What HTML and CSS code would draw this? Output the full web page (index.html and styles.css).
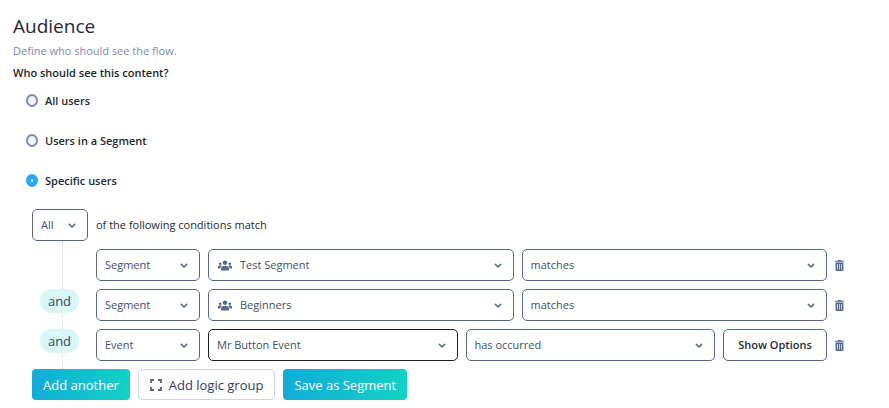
FILE: index.html
```html
<!DOCTYPE html>
<html lang="en">

<head>
    <meta charset="UTF-8">
    <meta name="viewport" content="width=device-width, initial-scale=1.0">
    <title>Audience</title>
    <link rel="stylesheet" href="styles.css">
</head>

<body>
    <svg class="sprite" aria-hidden="true">
        <symbol id="chevron" viewBox="0 0 8 6">
            <path d="M1.4 1.4 L4 4 L6.6 1.4" fill="none" stroke="currentColor" stroke-width="1.5" stroke-linecap="round" stroke-linejoin="round" />
        </symbol>
        <symbol id="people" viewBox="0 0 14 12">
            <circle cx="7" cy="2.8" r="2.2" />
            <circle cx="2.2" cy="3.7" r="1.3" />
            <circle cx="11.8" cy="3.7" r="1.3" />
            <path d="M3 10.6 V9 C3 7 4.3 5.9 5.6 5.9 H8.4 C9.7 5.9 11 7 11 9 V10.6 Z" />
            <path d="M0 8.4 V7 C0 6.1 .7 5.5 1.5 5.5 H3 C3.4 5.5 3.8 5.6 4 5.8 C3.1 6.4 2.5 7.2 2.4 8.4 Z" />
            <path d="M14 8.4 V7 C14 6.1 13.3 5.5 12.5 5.5 H11 C10.6 5.5 10.2 5.6 10 5.8 C10.9 6.4 11.5 7.2 11.6 8.4 Z" />
        </symbol>
        <symbol id="trash" viewBox="0 0 9 11">
            <path d="M0 .8 H2.6 L3 0 H6 L6.4 .8 H9 V1.8 H0 Z" />
            <path fill-rule="evenodd" d="M.6 2.4 H8.4 V10 Q8.4 11 7.4 11 H1.6 Q.6 11 .6 10 Z M2.2 4 V9.4 H2.9 V4 Z M4.15 4 V9.4 H4.85 V4 Z M6.1 4 V9.4 H6.8 V4 Z" />
        </symbol>
        <symbol id="expand" viewBox="0 0 12 12">
            <path d="M1 4 V1 H4 M8 1 H11 V4 M11 8 V11 H8 M4 11 H1 V8" fill="none" stroke="currentColor" stroke-width="1.8" />
        </symbol>
    </svg>

    <main class="audience">
        <h1>Audience</h1>
        <p class="hint">Define who should see the flow.</p>

        <fieldset class="who">
            <legend>Who should see this content?</legend>
            <label class="option"><input type="radio" name="who" value="all">All users</label>
            <label class="option"><input type="radio" name="who" value="segment">Users in a Segment</label>
            <label class="option"><input type="radio" name="who" value="specific" checked>Specific users</label>
        </fieldset>

        <section class="builder">
            <div class="match">
                <span class="select select-short">
                    <select id="match"><option>All</option><option>Any</option></select>
                    <svg class="chevron"><use href="#chevron" /></svg>
                </span>
                <label for="match">of the following conditions match</label>
            </div>

            <div class="conditions">
                <div class="condition">
                    <div class="joiner"></div>
                    <span class="select select-type">
                        <select aria-label="Condition type"><option>Segment</option><option>Event</option></select>
                        <svg class="chevron"><use href="#chevron" /></svg>
                    </span>
                    <span class="select with-icon">
                        <svg class="people"><use href="#people" /></svg>
                        <select aria-label="Segment"><option>Test Segment</option><option>Beginners</option></select>
                        <svg class="chevron"><use href="#chevron" /></svg>
                    </span>
                    <span class="select">
                        <select aria-label="Operator"><option>matches</option></select>
                        <svg class="chevron"><use href="#chevron" /></svg>
                    </span>
                    <button type="button" class="delete" aria-label="Delete condition"><svg><use href="#trash" /></svg></button>
                </div>

                <div class="condition">
                    <div class="joiner"><span class="and">and</span></div>
                    <span class="select select-type">
                        <select aria-label="Condition type"><option>Segment</option><option>Event</option></select>
                        <svg class="chevron"><use href="#chevron" /></svg>
                    </span>
                    <span class="select with-icon">
                        <svg class="people"><use href="#people" /></svg>
                        <select aria-label="Segment"><option>Beginners</option><option>Test Segment</option></select>
                        <svg class="chevron"><use href="#chevron" /></svg>
                    </span>
                    <span class="select">
                        <select aria-label="Operator"><option>matches</option></select>
                        <svg class="chevron"><use href="#chevron" /></svg>
                    </span>
                    <button type="button" class="delete" aria-label="Delete condition"><svg><use href="#trash" /></svg></button>
                </div>

                <div class="condition">
                    <div class="joiner"><span class="and">and</span></div>
                    <span class="select select-type">
                        <select aria-label="Condition type"><option>Event</option><option>Segment</option></select>
                        <svg class="chevron"><use href="#chevron" /></svg>
                    </span>
                    <span class="select active">
                        <select aria-label="Event"><option>Mr Button Event</option></select>
                        <svg class="chevron"><use href="#chevron" /></svg>
                    </span>
                    <span class="select">
                        <select aria-label="Operator"><option>has occurred</option></select>
                        <svg class="chevron"><use href="#chevron" /></svg>
                    </span>
                    <button type="button" class="show-options">Show Options</button>
                    <button type="button" class="delete" aria-label="Delete condition"><svg><use href="#trash" /></svg></button>
                </div>
            </div>

            <div class="actions">
                <button type="button" class="btn btn-primary">Add another</button>
                <button type="button" class="btn btn-outline"><svg><use href="#expand" /></svg>Add logic group</button>
                <button type="button" class="btn btn-primary">Save as Segment</button>
            </div>
        </section>
    </main>
</body>

</html>
```

FILE: styles.css
```css
* {
    box-sizing: border-box;
}

body {
    margin: 0;
    background-color: #fff;
    color: #242a35;
    font-family: "Open Sans", "Noto Sans", sans-serif;
    font-size: 11px;
}

button,
select {
    font: inherit;
    cursor: pointer;
}

svg {
    fill: currentColor;
}

.sprite {
    display: none;
}

.audience {
    padding: 12px 45px 8px 13px;
}

h1 {
    margin: 0;
    font-size: 19px;
    font-weight: 400;
    line-height: 28px;
}

.hint {
    margin: 0;
    color: #7d89b0;
    line-height: 21px;
}

/* Radio options */
.who {
    display: flex;
    flex-direction: column;
    gap: 8px;
    margin: 0 0 12px;
    padding: 0;
    border: 0;
}

.who legend {
    padding: 0;
    color: #1c1f2b;
    font-weight: 600;
    line-height: 24px;
}

.option {
    display: flex;
    align-items: center;
    gap: 7px;
    height: 32px;
    padding: 0 0 1px 13px;
    font-weight: 600;
}

.option input {
    appearance: none;
    width: 12px;
    height: 13px;
    margin: 0;
    border: 2px solid #7d89b0;
    border-radius: 50%;
    background-color: #f0f3fb;
}

.option input:checked {
    border: 5px solid #2aa7ff;
    background-color: #fff;
}

/* Condition builder */
.builder {
    padding-left: 19px;
}

.match {
    display: flex;
    align-items: center;
    gap: 8px;
}

.match label {
    padding-bottom: 1px;
}

.select {
    position: relative;
    flex: 1;
    color: #56658c;
}

.select select {
    appearance: none;
    display: block;
    width: 100%;
    height: 32px;
    padding: 0 24px 1px 8px;
    border: 1px solid #56658c;
    border-radius: 5px;
    background-color: #fff;
    color: #425068;
}

.select-short {
    flex: 0 0 56px;
}

.select-type {
    flex: 0 0 104px;
}

.with-icon select {
    padding-left: 31px;
}

.active select {
    border-color: #1c1f2b;
}

.chevron {
    position: absolute;
    top: 14px;
    right: 12px;
    width: 8px;
    height: 6px;
    pointer-events: none;
}

.people {
    position: absolute;
    top: 11px;
    left: 10px;
    width: 14px;
    height: 12px;
    pointer-events: none;
}

.conditions {
    position: relative;
    display: flex;
    flex-direction: column;
    gap: 8px;
    padding: 8px 0;
}

/* Dotted line behind the "and" pills */
.conditions::before {
    content: "";
    position: absolute;
    top: 0;
    bottom: 0;
    left: 30px;
    border-left: 1px dotted #d0d2d6;
}

.condition {
    display: flex;
    align-items: center;
    gap: 8px;
}

.joiner {
    position: relative;
    align-self: flex-start;
    width: 56px;
    padding-left: 8px;
}

.and {
    display: block;
    width: 39px;
    border-radius: 12px;
    background-color: #d8f8f7;
    color: #35465a;
    font-size: 13px;
    line-height: 24px;
    text-align: center;
}

.show-options {
    width: 104px;
    height: 32px;
    padding: 0 0 1px;
    border: 1px solid #56658c;
    border-radius: 5px;
    background-color: #fff;
    color: #242a35;
    font-weight: 600;
}

.delete {
    padding: 0;
    border: 0;
    background: none;
    color: #56658c;
}

.delete svg {
    display: block;
    width: 9px;
    height: 11px;
}

.actions {
    display: flex;
    gap: 8px;
}

.btn {
    display: flex;
    align-items: center;
    height: 31px;
    padding: 0 11px;
    border: 1px solid #cfd3e3;
    border-radius: 4px;
    font-size: 13px;
}

.btn-primary {
    border: 0;
    background-image: linear-gradient(100deg, #12abd8, #14d2c4);
    color: #fff;
}

.btn-outline {
    background-color: #fff;
    color: #35405a;
}

.btn-outline svg {
    width: 12px;
    height: 12px;
    margin-right: 7px;
    color: #56658c;
}
```
